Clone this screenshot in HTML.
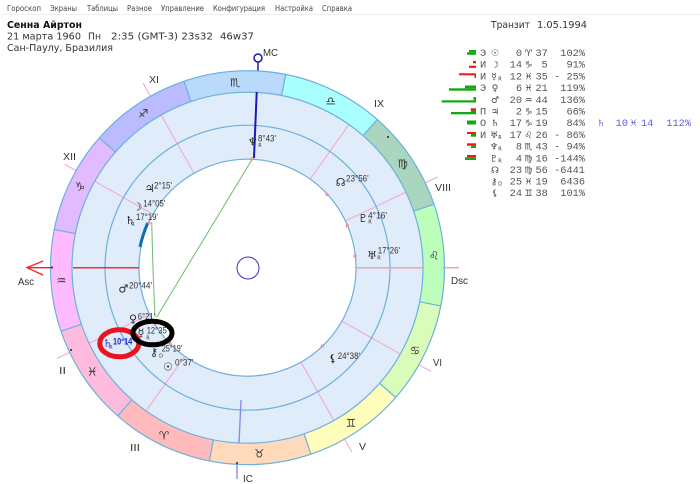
<!DOCTYPE html>
<html><head><meta charset="utf-8"><style>
html,body{margin:0;padding:0;background:#fff;width:700px;height:484px;overflow:hidden}
svg{display:block;overflow:hidden;filter:blur(.3px)}
text{font-family:"Liberation Sans","DejaVu Sans",sans-serif}
.m{font:8px "DejaVu Sans",sans-serif;fill:#444}
.h{font:10px "DejaVu Sans",sans-serif;fill:#333}
.l{font:10px "Liberation Sans",sans-serif;fill:#333}
.s{font:11.5px "DejaVu Sans",sans-serif;fill:#333;text-anchor:middle;transform:translateY(.5px)}
.d{font:9.5px "Liberation Sans",sans-serif;fill:#333}
.g{font:11px "DejaVu Sans",sans-serif;fill:#222;text-anchor:middle}
.r{font:5px "DejaVu Sans",sans-serif;fill:#333;text-anchor:middle}
.t{font:10.3px "Liberation Mono",monospace;fill:#555}
.te{font:10.3px "Liberation Mono",monospace;fill:#555;text-anchor:end}
.tg{font:9px "DejaVu Sans",sans-serif;fill:#444;text-anchor:middle}
</style></head><body>
<svg width="700" height="484" viewBox="0 0 700 484" xmlns="http://www.w3.org/2000/svg">
<rect width="700" height="484" fill="#fff"/>
<rect x="0" y="14" width="700" height="1" fill="#eee"/>
<text class="m" x="7" y="11" textLength="34" lengthAdjust="spacingAndGlyphs">Гороскоп</text>
<text class="m" x="50" y="11" textLength="27" lengthAdjust="spacingAndGlyphs">Экраны</text>
<text class="m" x="87" y="11" textLength="31" lengthAdjust="spacingAndGlyphs">Таблицы</text>
<text class="m" x="127" y="11" textLength="25" lengthAdjust="spacingAndGlyphs">Разное</text>
<text class="m" x="161" y="11" textLength="43" lengthAdjust="spacingAndGlyphs">Управление</text>
<text class="m" x="213" y="11" textLength="52" lengthAdjust="spacingAndGlyphs">Конфигурация</text>
<text class="m" x="275" y="11" textLength="38" lengthAdjust="spacingAndGlyphs">Настройка</text>
<text class="m" x="322" y="11" textLength="30" lengthAdjust="spacingAndGlyphs">Справка</text>

<text class="h" x="7" y="28" style="font-weight:bold;fill:#111" textLength="75" lengthAdjust="spacingAndGlyphs">Сенна Айртон</text>
<text class="h" x="7" y="39.5" textLength="74" lengthAdjust="spacingAndGlyphs">21 марта 1960</text>
<text class="h" x="88" y="39.5" textLength="13" lengthAdjust="spacingAndGlyphs">Пн</text>
<text class="h" x="111" y="39.5" textLength="102" lengthAdjust="spacingAndGlyphs">2:35 (GMT-3) 23s32</text>
<text class="h" x="220" y="39.5" textLength="34" lengthAdjust="spacingAndGlyphs">46w37</text>
<text class="h" x="7" y="51" textLength="106" lengthAdjust="spacingAndGlyphs">Сан-Паулу, Бразилия</text>
<text class="h" x="491" y="28" textLength="39" lengthAdjust="spacingAndGlyphs">Транзит</text>
<text class="h" x="537" y="28" textLength="50" lengthAdjust="spacingAndGlyphs">1.05.1994</text>

<g transform="translate(247.5 267.7)">
  <circle r="197" fill="#e1ecfa"/>
  <g stroke="#f4a8d4" stroke-width="1.1" fill="none">
    <line y1="-109" y2="-212" transform="rotate(330.5)"/>
    <line y1="-109" y2="-210" transform="rotate(299.5)"/>
    <line y1="-109" y2="-196" transform="rotate(35.3)"/>
    <line y1="-109" y2="-211" transform="rotate(64.5)"/>
    <line y1="-109" y2="-211" transform="rotate(119.5)"/>
    <line y1="-109" y2="-212" transform="rotate(150.5)"/>
    <line y1="-109" y2="-196" transform="rotate(215.3)"/>
    <line y1="-109" y2="-211" transform="rotate(244.5)"/>
  </g>
  <g fill="none" stroke-width="21.5" stroke-dasharray="30.1 329.9">
    <circle r="186.3" pathLength="360" stroke="#b9dafa" transform="rotate(-108.8)"/>
    <circle r="186.3" pathLength="360" stroke="#aaffff" transform="rotate(-78.8)"/>
    <circle r="186.3" pathLength="360" stroke="#aad6c0" transform="rotate(-48.8)"/>
    <circle r="186.3" pathLength="360" stroke="#bbffbb" transform="rotate(-18.8)"/>
    <circle r="186.3" pathLength="360" stroke="#d9fcbb" transform="rotate(11.2)"/>
    <circle r="186.3" pathLength="360" stroke="#ffffbb" transform="rotate(41.2)"/>
    <circle r="186.3" pathLength="360" stroke="#ffd9bb" transform="rotate(71.2)"/>
    <circle r="186.3" pathLength="360" stroke="#ffbbbb" transform="rotate(101.2)"/>
    <circle r="186.3" pathLength="360" stroke="#ffbbdd" transform="rotate(131.2)"/>
    <circle r="186.3" pathLength="360" stroke="#ffbbff" transform="rotate(161.2)"/>
    <circle r="186.3" pathLength="360" stroke="#e0bbff" transform="rotate(191.2)"/>
    <circle r="186.3" pathLength="360" stroke="#bbbbff" transform="rotate(221.2)"/>
  </g>
  <g stroke="#6cb0dc" stroke-width="1.2" fill="none">
    <line y1="-175.5" y2="-197" transform="rotate(11.2)"/>
    <line y1="-175.5" y2="-197" transform="rotate(41.2)"/>
    <line y1="-175.5" y2="-197" transform="rotate(71.2)"/>
    <line y1="-175.5" y2="-197" transform="rotate(101.2)"/>
    <line y1="-175.5" y2="-197" transform="rotate(131.2)"/>
    <line y1="-175.5" y2="-197" transform="rotate(161.2)"/>
    <line y1="-175.5" y2="-197" transform="rotate(191.2)"/>
    <line y1="-175.5" y2="-197" transform="rotate(221.2)"/>
    <line y1="-175.5" y2="-197" transform="rotate(251.2)"/>
    <line y1="-175.5" y2="-197" transform="rotate(281.2)"/>
    <line y1="-175.5" y2="-197" transform="rotate(311.2)"/>
    <line y1="-175.5" y2="-197" transform="rotate(341.2)"/>
    <circle r="197"/>
    <circle r="175.5"/>
    <circle r="142.5"/>
  </g>
  <circle r="108.5" fill="#fff" stroke="#6cb0dc" stroke-width="1.2"/>
</g>

<g fill="none">
  <line x1="73" y1="267.7" x2="139" y2="267.7" stroke="#f03030" stroke-width="1.5"/>
  <path d="M51 267.7H27M43 261L27 267.7L43 275" stroke="#f82020" stroke-width="1.3"/>
  <path d="M355 267.7H424M443 267.7H459" stroke="#f4a0a8" stroke-width="1.5"/>
  <path d="M258 62V70.5" stroke="#1a1ab5" stroke-width="1.5"/>
  <path d="M256.7 92L254 158" stroke="#1a1ab5" stroke-width="2"/>
  <circle cx="258" cy="58" r="4" stroke="#1a1ab5" stroke-width="1.5" fill="#fff"/>
  <path d="M241 400L239 443M237 464V479" stroke="#8a8aee" stroke-width="1.4"/>
  <path d="M251.7 160L156.7 317" stroke="#6cbc6c" stroke-width="1"/>
  <path d="M151.7 222L153 270L155 317" stroke="#6cbc6c" stroke-width="1"/>
  <path d="M147.7 223Q142.5 235 140 247" stroke="#0f6fb5" stroke-width="3"/>
  <circle cx="248" cy="268" r="11" stroke="#3535c0" stroke-width="1"/>
</g>
<g fill="#222">
  <circle cx="388" cy="137" r="1"/><circle cx="52" cy="267.5" r="1"/><circle cx="71" cy="350" r="1"/><circle cx="237" cy="463" r="1"/>
</g>
<g fill="#fdd" stroke="#f06070" stroke-width=".8">
  <circle cx="327" cy="194.5" r="1.1"/><circle cx="347.3" cy="225.7" r="1.1"/><circle cx="355" cy="256" r="1.1"/><circle cx="322.3" cy="346" r="1.1"/><circle cx="155" cy="324" r="1.1"/><circle cx="170" cy="343" r="1.1"/><circle cx="149" cy="223" r="1.1"/><circle cx="252" cy="159" r="1.1"/>
</g>

<text class="s" x="235" y="86">♏</text>
<text class="s" x="330.7" y="104.5">♎</text>
<text class="s" x="402.7" y="167">♍</text>
<text class="s" x="434" y="259">♌</text>
<text class="s" x="415" y="354">♋</text>
<text class="s" x="351" y="426.5">♊</text>
<text class="s" x="259.3" y="457">♉</text>
<text class="s" x="164" y="439">♈</text>
<text class="s" x="92.3" y="375">♓</text>
<text class="s" x="61.3" y="284">♒</text>
<text class="s" x="80" y="190">♑</text>
<text class="s" x="143.3" y="117">♐</text>

<text class="l" x="263" y="56" textLength="15" lengthAdjust="spacingAndGlyphs">MC</text>
<text class="l" x="149" y="83" textLength="10" lengthAdjust="spacingAndGlyphs">XI</text>
<text class="l" x="374" y="107" textLength="10" lengthAdjust="spacingAndGlyphs">IX</text>
<text class="l" x="435" y="191" textLength="16" lengthAdjust="spacingAndGlyphs">VIII</text>
<text class="l" x="63" y="160" textLength="13" lengthAdjust="spacingAndGlyphs">XII</text>
<text class="l" x="18" y="285" textLength="16" lengthAdjust="spacingAndGlyphs">Asc</text>
<text class="l" x="451" y="284" textLength="17" lengthAdjust="spacingAndGlyphs">Dsc</text>
<text class="l" x="59" y="374" textLength="7" lengthAdjust="spacingAndGlyphs">II</text>
<text class="l" x="130" y="451" textLength="10" lengthAdjust="spacingAndGlyphs">III</text>
<text class="l" x="243" y="481.8" textLength="10" lengthAdjust="spacingAndGlyphs">IC</text>
<text class="l" x="359" y="450" textLength="7" lengthAdjust="spacingAndGlyphs">V</text>
<text class="l" x="433" y="366" textLength="9" lengthAdjust="spacingAndGlyphs">VI</text>

<text class="g" x="252.7" y="145.5">♆</text><text class="r" x="260" y="147">R</text>
<text class="d" x="258" y="141.5" textLength="18" lengthAdjust="spacingAndGlyphs">8°43'</text>
<text class="g" x="149.7" y="192">♃</text>
<text class="d" x="154" y="188.5" textLength="18" lengthAdjust="spacingAndGlyphs">2°15'</text>
<text class="g" x="137.3" y="210.5">☽</text>
<text class="d" x="143.3" y="206.5" textLength="22" lengthAdjust="spacingAndGlyphs">14°05'</text>
<text class="g" x="130" y="224">♄</text><text class="r" x="133" y="226">R</text>
<text class="d" x="136" y="220" textLength="22" lengthAdjust="spacingAndGlyphs">17°19'</text>
<text class="g" x="123.3" y="292.5">♂</text>
<text class="d" x="129" y="288.5" textLength="23" lengthAdjust="spacingAndGlyphs">20°44'</text>
<text class="g" x="133" y="322.5">♀</text>
<text class="d" x="137.7" y="319.5" textLength="17.5" lengthAdjust="spacingAndGlyphs">6°21'</text>
<text class="g" x="141" y="336.5">☿</text><text class="r" x="148" y="339.5">R</text>
<text class="d" x="146.7" y="333.5" textLength="21.5" lengthAdjust="spacingAndGlyphs">12°35'</text>
<text class="g" x="154" y="356">⚷</text><text class="r" x="161" y="357.5">D</text>
<text class="d" x="161.7" y="351.5" textLength="20.5" lengthAdjust="spacingAndGlyphs">25°19'</text>
<text class="g" x="168" y="370.5">☉</text>
<text class="d" x="175" y="365.5" textLength="18.5" lengthAdjust="spacingAndGlyphs">0°37'</text>
<text class="g" x="340.7" y="186">☊</text>
<text class="d" x="346" y="181.5" textLength="22.7" lengthAdjust="spacingAndGlyphs">23°56'</text>
<text class="g" x="363" y="222">♇</text><text class="r" x="370" y="223.5">R</text>
<text class="d" x="368" y="218.5" textLength="19" lengthAdjust="spacingAndGlyphs">4°16'</text>
<text class="g" x="372" y="259">♅</text><text class="r" x="379" y="259.5">R</text>
<text class="d" x="377.7" y="253.5" textLength="22.3" lengthAdjust="spacingAndGlyphs">17°26'</text>
<text class="g" x="333" y="362" style="fill:#111;font-weight:bold">⚸</text>
<text class="d" x="337.7" y="359" textLength="22.3" lengthAdjust="spacingAndGlyphs">24°38'</text>
<text class="g" x="107.7" y="347" style="fill:#3030d8">♄</text><text class="r" x="111" y="349" style="fill:#3030d8">R</text>
<text class="d" x="113" y="344.5" textLength="21" lengthAdjust="spacingAndGlyphs" style="fill:#2020d0;font-weight:bold">10°14'</text>

<ellipse cx="119.3" cy="343.3" rx="19.5" ry="13.5" fill="none" stroke="#e8141e" stroke-width="5"/>
<ellipse cx="152.5" cy="333" rx="19.5" ry="11.8" fill="none" stroke="#000" stroke-width="5"/>

<g fill="#12a812">
  <rect x="467" y="52.3" width="9" height="2.5"/><rect x="469" y="50" width="7" height="2.3"/>
  <rect x="449" y="88.3" width="27" height="2.4"/><rect x="465" y="85.5" width="11" height="2.8"/>
  <rect x="441.7" y="100.3" width="34.3" height="2.2"/><rect x="473.5" y="97" width="2.5" height="3.3"/>
  <rect x="451" y="112" width="25" height="2.3"/><rect x="471" y="110.5" width="5" height="1.5"/>
  <rect x="467" y="120.5" width="9" height="4"/>
  <rect x="471" y="134" width="5" height="2.7"/>
  <rect x="471" y="145.7" width="5" height="2.3"/>
  <rect x="465" y="157.3" width="11" height="2.7"/>
</g>
<g fill="#f01818">
  <rect x="469" y="65.7" width="7" height="2.2"/><rect x="473" y="61" width="3" height="2.3"/>
  <rect x="459" y="73.3" width="17" height="2"/><rect x="474.5" y="75" width="1.5" height="3"/>
  <rect x="470.7" y="108.3" width="5.3" height="2.2"/>
  <rect x="467" y="132" width="9" height="2"/>
  <rect x="467" y="143.3" width="9" height="2.4"/>
  <rect x="467" y="155" width="9" height="2.3"/>
</g>

<text class="t" x="480" y="56">Э</text><text class="tg" x="495" y="56">☉</text><text class="te" x="522" y="56">0</text><text class="tg" x="528.5" y="56">♈</text><text class="t" x="535.5" y="56">37</text><text class="te" x="585" y="56">102%</text>
<text class="t" x="480" y="67.5">И</text><text class="tg" x="495" y="67.5">☽</text><text class="te" x="522" y="67.5">14</text><text class="tg" x="528.5" y="67.5">♑</text><text class="t" x="541.5" y="67.5">5</text><text class="te" x="585" y="67.5">91%</text>
<text class="t" x="480" y="79.5">И</text><text class="tg" x="494" y="79.5">☿</text><text class="r" x="500" y="80.5">R</text><text class="te" x="522" y="79.5">12</text><text class="tg" x="528.5" y="79.5">♓</text><text class="t" x="535.5" y="79.5">35</text><text class="te" x="585" y="79.5">- 25%</text>
<text class="t" x="480" y="91">Э</text><text class="tg" x="495" y="91">♀</text><text class="te" x="522" y="91">6</text><text class="tg" x="528.5" y="91">♓</text><text class="t" x="535.5" y="91">21</text><text class="te" x="585" y="91">119%</text>
<text class="tg" x="495" y="103">♂</text><text class="te" x="522" y="103">20</text><text class="tg" x="528.5" y="103">♒</text><text class="t" x="535.5" y="103">44</text><text class="te" x="585" y="103">136%</text>
<text class="t" x="480" y="114.5">П</text><text class="tg" x="495" y="114.5">♃</text><text class="te" x="522" y="114.5">2</text><text class="tg" x="528.5" y="114.5">♑</text><text class="t" x="535.5" y="114.5">15</text><text class="te" x="585" y="114.5">66%</text>
<text class="t" x="480" y="126">О</text><text class="tg" x="495" y="126">♄</text><text class="te" x="522" y="126">17</text><text class="tg" x="528.5" y="126">♑</text><text class="t" x="535.5" y="126">19</text><text class="te" x="585" y="126">84%</text>
<text class="t" x="480" y="138">И</text><text class="tg" x="494" y="138">♅</text><text class="r" x="500" y="139">R</text><text class="te" x="522" y="138">17</text><text class="tg" x="528.5" y="138">♌</text><text class="t" x="535.5" y="138">26</text><text class="te" x="585" y="138">- 86%</text>
<text class="tg" x="494" y="149.5">♆</text><text class="r" x="500" y="150.5">R</text><text class="te" x="522" y="149.5">8</text><text class="tg" x="528.5" y="149.5">♏</text><text class="t" x="535.5" y="149.5">43</text><text class="te" x="585" y="149.5">- 94%</text>
<text class="tg" x="494" y="161.5">♇</text><text class="r" x="500" y="162.5">R</text><text class="te" x="522" y="161.5">4</text><text class="tg" x="528.5" y="161.5">♍</text><text class="t" x="535.5" y="161.5">16</text><text class="te" x="585" y="161.5">-144%</text>
<text class="tg" x="495" y="173">☊</text><text class="te" x="522" y="173">23</text><text class="tg" x="528.5" y="173">♍</text><text class="t" x="535.5" y="173">56</text><text class="te" x="585" y="173">-6441</text>
<text class="tg" x="494" y="184.5">⚷</text><text class="r" x="500" y="185.5">D</text><text class="te" x="522" y="184.5">25</text><text class="tg" x="528.5" y="184.5">♓</text><text class="t" x="535.5" y="184.5">19</text><text class="te" x="585" y="184.5">6436</text>
<text class="tg" x="495" y="196">⚸</text><text class="te" x="522" y="196">24</text><text class="tg" x="528.5" y="196">♊</text><text class="t" x="535.5" y="196">38</text><text class="te" x="585" y="196">101%</text>

<text class="tg" x="601" y="126" style="fill:#5a5aee">♄</text>
<text class="te" x="628" y="126" style="fill:#5a5aee">10</text>
<text class="tg" x="633.5" y="126" style="fill:#5a5aee">♓</text>
<text class="t" x="641" y="126" style="fill:#5a5aee">14</text>
<text class="te" x="691" y="126" style="fill:#5a5aee">112%</text>
</svg>
</body></html>
